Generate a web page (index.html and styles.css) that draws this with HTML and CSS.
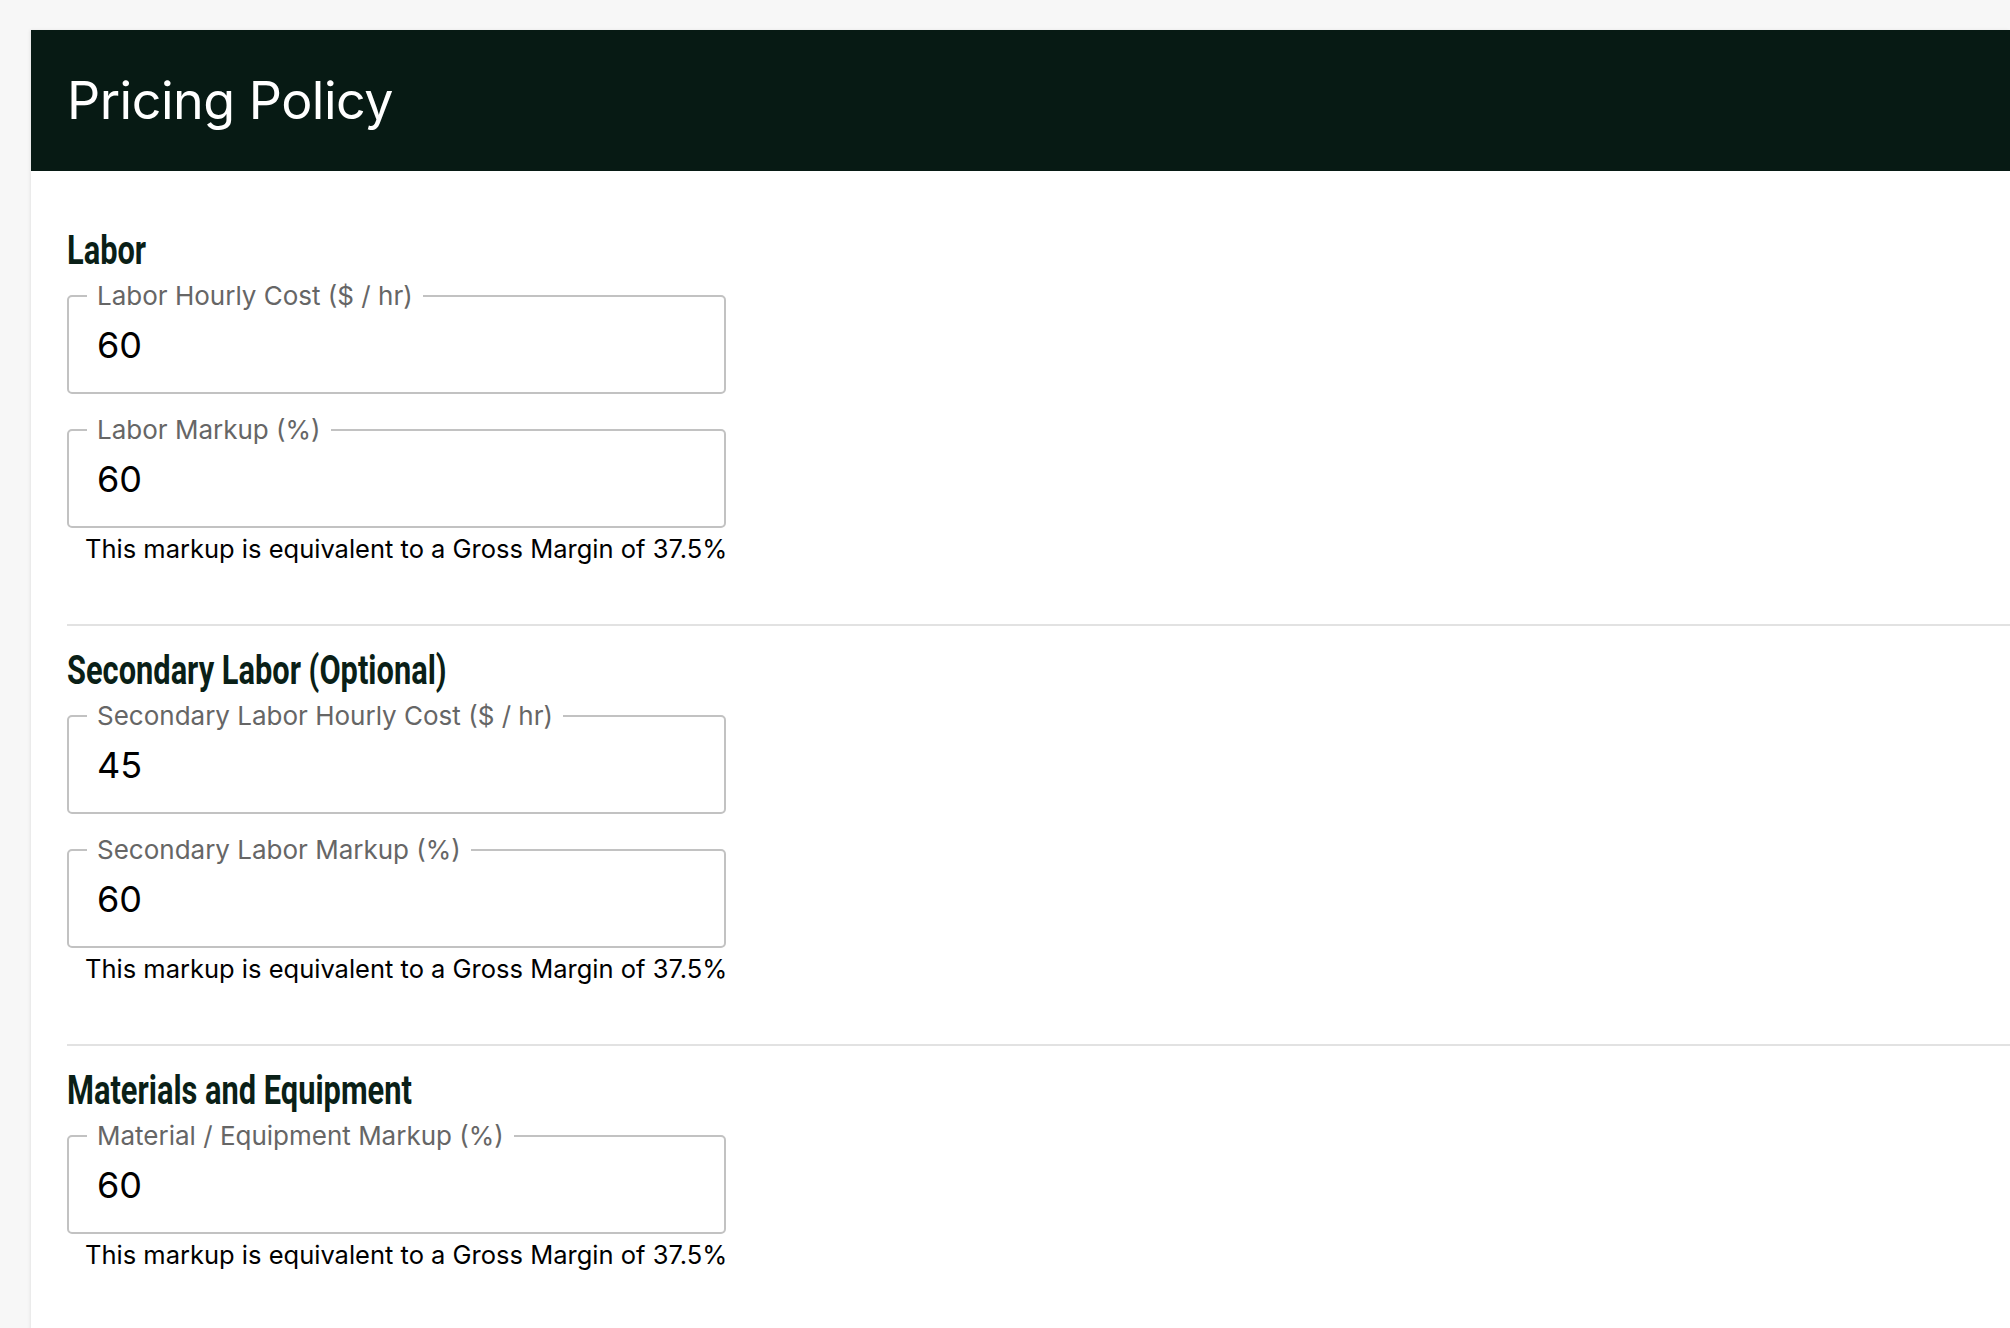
FILE: index.html
```html
<!DOCTYPE html>
<html lang="en">
<head>
  <meta charset="UTF-8">
  <meta name="viewport" content="width=device-width, initial-scale=1.0">
  <title>Pricing Policy</title>
  <link rel="stylesheet" href="styles.css">
</head>
<body>
<div class="card">
  <div class="card-header">
    <h1 class="title">Pricing Policy</h1>
  </div>

  <div class="card-body">
    <section class="group">
      <h2 class="group-title">Labor</h2>
      <fieldset class="field">
        <legend>Labor Hourly Cost ($ / hr)</legend>
        <input class="input" type="text" value="60">
      </fieldset>
      <fieldset class="field">
        <legend>Labor Markup (%)</legend>
        <input class="input" type="text" value="60">
      </fieldset>
      <p class="helper">This markup is equivalent to a Gross Margin of 37.5%</p>
    </section>

    <section class="group">
      <h2 class="group-title">Secondary Labor (Optional)</h2>
      <fieldset class="field">
        <legend>Secondary Labor Hourly Cost ($ / hr)</legend>
        <input class="input" type="text" value="45">
      </fieldset>
      <fieldset class="field">
        <legend>Secondary Labor Markup (%)</legend>
        <input class="input" type="text" value="60">
      </fieldset>
      <p class="helper">This markup is equivalent to a Gross Margin of 37.5%</p>
    </section>

    <section class="group">
      <h2 class="group-title">Materials and Equipment</h2>
      <fieldset class="field">
        <legend>Material / Equipment Markup (%)</legend>
        <input class="input" type="text" value="60">
      </fieldset>
      <p class="helper">This markup is equivalent to a Gross Margin of 37.5%</p>
    </section>
  </div>
</div>
</body>
</html>
```

FILE: styles.css
```css
html, body {
  height: 100%;
}

body {
  margin: 0;
  padding: 30px 0 0 31px;
  box-sizing: border-box;
  overflow: hidden;
  background: #f7f7f7;
  font-family: Inter, "Noto Sans", sans-serif;
  color: #000;
}

.card {
  background: #fff;
  min-height: 100%;
  box-shadow: -1px 0 3px rgba(0, 0, 0, 0.08);
}

.card-header {
  background: #071a14;
  height: 141px;
  display: flex;
  align-items: center;
  padding-left: 36px;
}

.title {
  margin: 0;
  color: #fff;
  font-size: 52px;
  font-weight: 400;
  letter-spacing: -0.5px;
}

.card-body {
  padding: 58px 0 0 36px;
}

.group {
  padding-bottom: 60px;
  border-bottom: 2px solid #e2e2e2;
  margin-bottom: 23px;
}

.group:last-child {
  border-bottom: none;
}

/* condensed heading: no narrow face installed, so squeeze a bold one */
.group-title {
  margin: 0 0 8px;
  height: 44px;
  line-height: 44px;
  font-family: Roboto, "Liberation Sans", sans-serif;
  font-weight: 700;
  font-size: 40px;
  color: #0a1f17;
  white-space: nowrap;
  transform: scaleX(0.77);
  transform-origin: left center;
}

.field {
  width: 659px;
  box-sizing: border-box;
  height: 113px;
  margin: 0 0 21px;
  padding: 0 28px;
  border: 2px solid #c2c2c2;
  border-radius: 5px;
  display: flex;
  align-items: center;
}

.field legend {
  margin-left: -10px;
  padding: 0 10px;
  line-height: 30px;
  font-size: 26px;
  color: #666;
}

.input {
  border: none;
  outline: 0;
  padding: 0;
  margin-top: -14px;
  width: 100%;
  font-family: inherit;
  font-size: 36px;
  color: #000;
  background: transparent;
}

.field + .helper {
  margin-top: -15px;
}

.helper {
  margin: 0 0 0 18px;
  line-height: 30px;
  font-size: 25.5px;
  color: #000;
}
```
